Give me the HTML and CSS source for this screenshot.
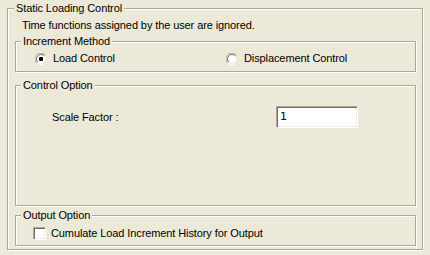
FILE: index.html
```html
<!DOCTYPE html>
<html>
<head>
<meta charset="utf-8">
<link rel="stylesheet" href="styles.css">
</head>
<body>
<div class="group outer">
  <span class="title">Static Loading Control</span>
  <div class="note">Time functions assigned by the user are ignored.</div>

  <div class="group inc">
    <span class="title">Increment Method</span>
    <div class="radios">
      <label class="opt">
        <svg class="radio" width="12" height="12" viewBox="0 0 12 12">
          <circle cx="6" cy="6" r="5.5" fill="none" stroke="#ffffff" stroke-dasharray="17.3 17.3" stroke-dashoffset="-6" />
          <path d="M10.5 2 A5.5 5.5 0 0 0 1.5 10" fill="none" stroke="#ACA899" stroke-width="1"/>
          <circle cx="6" cy="6" r="4.5" fill="#fff" stroke="#F1EFE2"/>
          <path d="M9.2 2.8 A4.5 4.5 0 0 0 2.8 9.2" fill="none" stroke="#716F64" stroke-width="1"/>
          <rect x="4" y="4" width="4" height="4" rx="1" fill="#000"/>
        </svg>
        <span>Load Control</span>
      </label>
      <label class="opt">
        <svg class="radio" width="12" height="12" viewBox="0 0 12 12">
          <circle cx="6" cy="6" r="5.5" fill="none" stroke="#ffffff" stroke-dasharray="17.3 17.3" stroke-dashoffset="-6" />
          <path d="M10.5 2 A5.5 5.5 0 0 0 1.5 10" fill="none" stroke="#ACA899" stroke-width="1"/>
          <circle cx="6" cy="6" r="4.5" fill="#fff" stroke="#F1EFE2"/>
          <path d="M9.2 2.8 A4.5 4.5 0 0 0 2.8 9.2" fill="none" stroke="#716F64" stroke-width="1"/>
        </svg>
        <span>Displacement Control</span>
      </label>
    </div>
  </div>

  <div class="group ctrl">
    <span class="title">Control Option</span>
    <div class="field">
      <span class="label">Scale Factor :</span>
      <div class="input">1</div>
    </div>
  </div>

  <div class="group out">
    <span class="title">Output Option</span>
    <label class="check">
      <span class="box"></span>
      <span>Cumulate Load Increment History for Output</span>
    </label>
  </div>
</div>
</body>
</html>
```

FILE: styles.css
```css
html, body {
  margin: 0;
  padding: 0;
  background: #ECE9D8;
  width: 430px;
  height: 255px;
  overflow: hidden;
}
body {
  font-family: "Liberation Sans", Arial, sans-serif;
  font-size: 11px;
  line-height: 13px;
  letter-spacing: -0.1px;
  color: #000;
}
.group {
  box-sizing: border-box;
  border: 1px solid #ACA899;
  box-shadow: inset 1px 1px 0 #fff, 1px 1px 0 #fff;
  display: flex;
  flex-direction: column;
  align-items: flex-start;
}
.title {
  display: block;
  background: #ECE9D8;
  padding: 0 2px;
  margin-top: -7px;
  height: 13px;
  white-space: nowrap;
}
.outer {
  margin: 8px 0 0 7px;
  width: 416px;
  height: 242px;
  padding: 0 6px 0 7px;
}
.outer > .title {
  margin-left: -1px;
}
.note {
  margin: 4px 0 0 7px;
  white-space: nowrap;
}
.inc, .ctrl, .out {
  width: 401px;
}
.inc > .title, .ctrl > .title, .out > .title {
  margin-left: 5px;
}
.inc {
  margin-top: 9px;
  height: 31px;
}
.radios {
  display: grid;
  grid-template-columns: 191px 1fr;
  margin: 4px 0 0 19px;
  width: 370px;
}
.opt {
  display: flex;
  align-items: center;
  gap: 6px;
  height: 13px;
}
.radio {
  display: block;
  flex: none;
}
.ctrl {
  margin-top: 13px;
  height: 121px;
}
.field {
  display: flex;
  align-items: center;
  margin: 14px 0 0 36px;
  height: 22px;
}
.label {
  width: 224px;
  white-space: nowrap;
}
.input {
  box-sizing: border-box;
  width: 82px;
  height: 22px;
  background: #fff;
  border: 1px solid;
  border-color: #ACA899 #fff #fff #ACA899;
  box-shadow: inset 1px 1px 0 #716F64, inset -1px -1px 0 #F1EFE2;
  padding: 3px 0 0 3px;
  font-family: "DejaVu Sans", sans-serif;
  font-size: 11px;
  line-height: 14px;
  letter-spacing: 0;
}
.out {
  margin-top: 9px;
  height: 31px;
}
.check {
  display: flex;
  align-items: center;
  gap: 5px;
  margin: 5px 0 0 17px;
  height: 13px;
  white-space: nowrap;
}
.box {
  box-sizing: border-box;
  width: 13px;
  height: 13px;
  background: #fff;
  border: 1px solid;
  border-color: #ACA899 #fff #fff #ACA899;
  box-shadow: inset 1px 1px 0 #716F64, inset -1px -1px 0 #F1EFE2;
  flex: none;
}
```
